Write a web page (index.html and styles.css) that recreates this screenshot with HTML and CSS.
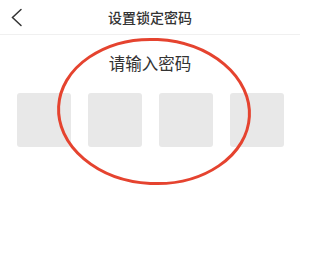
FILE: index.html
```html
<!DOCTYPE html>
<html lang="zh">
<head>
<meta charset="utf-8">
<link rel="stylesheet" href="styles.css">
</head>
<body>
<div class="page">
  <header class="topbar">
    <span class="back">
      <svg width="14" height="20" viewBox="0 0 14 20"><path d="M11 1.5 L2.5 9.5 L11 17.5" fill="none" stroke="#333" stroke-width="1.5" stroke-linecap="round" stroke-linejoin="miter"/></svg>
    </span>
    <h1 class="title">设置锁定密码</h1>
  </header>
  <p class="prompt">请输入密码</p>
  <div class="pins">
    <div class="pin"></div>
    <div class="pin"></div>
    <div class="pin"></div>
    <div class="pin"></div>
  </div>
  <svg class="mark" width="300" height="276" viewBox="0 0 300 276">
    <ellipse cx="154" cy="111.5" rx="95.5" ry="72" fill="none" stroke="#e5432f" stroke-width="3" transform="rotate(3 154 111.5)"/>
  </svg>
</div>
</body>
</html>
```

FILE: styles.css
```css
html, body {
  margin: 0;
  padding: 0;
  background: #ffffff;
}
.page {
  position: relative;
  width: 300px;
  height: 276px;
  overflow: hidden;
  font-family: "Noto Sans CJK SC", "Noto Sans", sans-serif;
  color: #333333;
}
.topbar {
  position: relative;
  height: 34px;
  border-bottom: 1px solid #f0f0f0;
  display: flex;
  align-items: center;
  justify-content: center;
}
.back {
  position: absolute;
  left: 10px;
  top: 7.5px;
  display: flex;
}
.title {
  margin: 0;
  font-size: 14px;
  font-weight: 500;
  line-height: 20px;
  color: #333333;
}
.prompt {
  margin: 16px 0 0;
  text-align: center;
  font-size: 16.5px;
  line-height: 24px;
  color: #333333;
}
.pins {
  margin-top: 18px;
  padding: 0 16px 0 17px;
  display: flex;
  justify-content: space-between;
}
.pin {
  width: 54px;
  height: 54px;
  border-radius: 3px;
  background: #e8e8e8;
}
.mark {
  position: absolute;
  left: 0;
  top: 0;
  pointer-events: none;
}
```
